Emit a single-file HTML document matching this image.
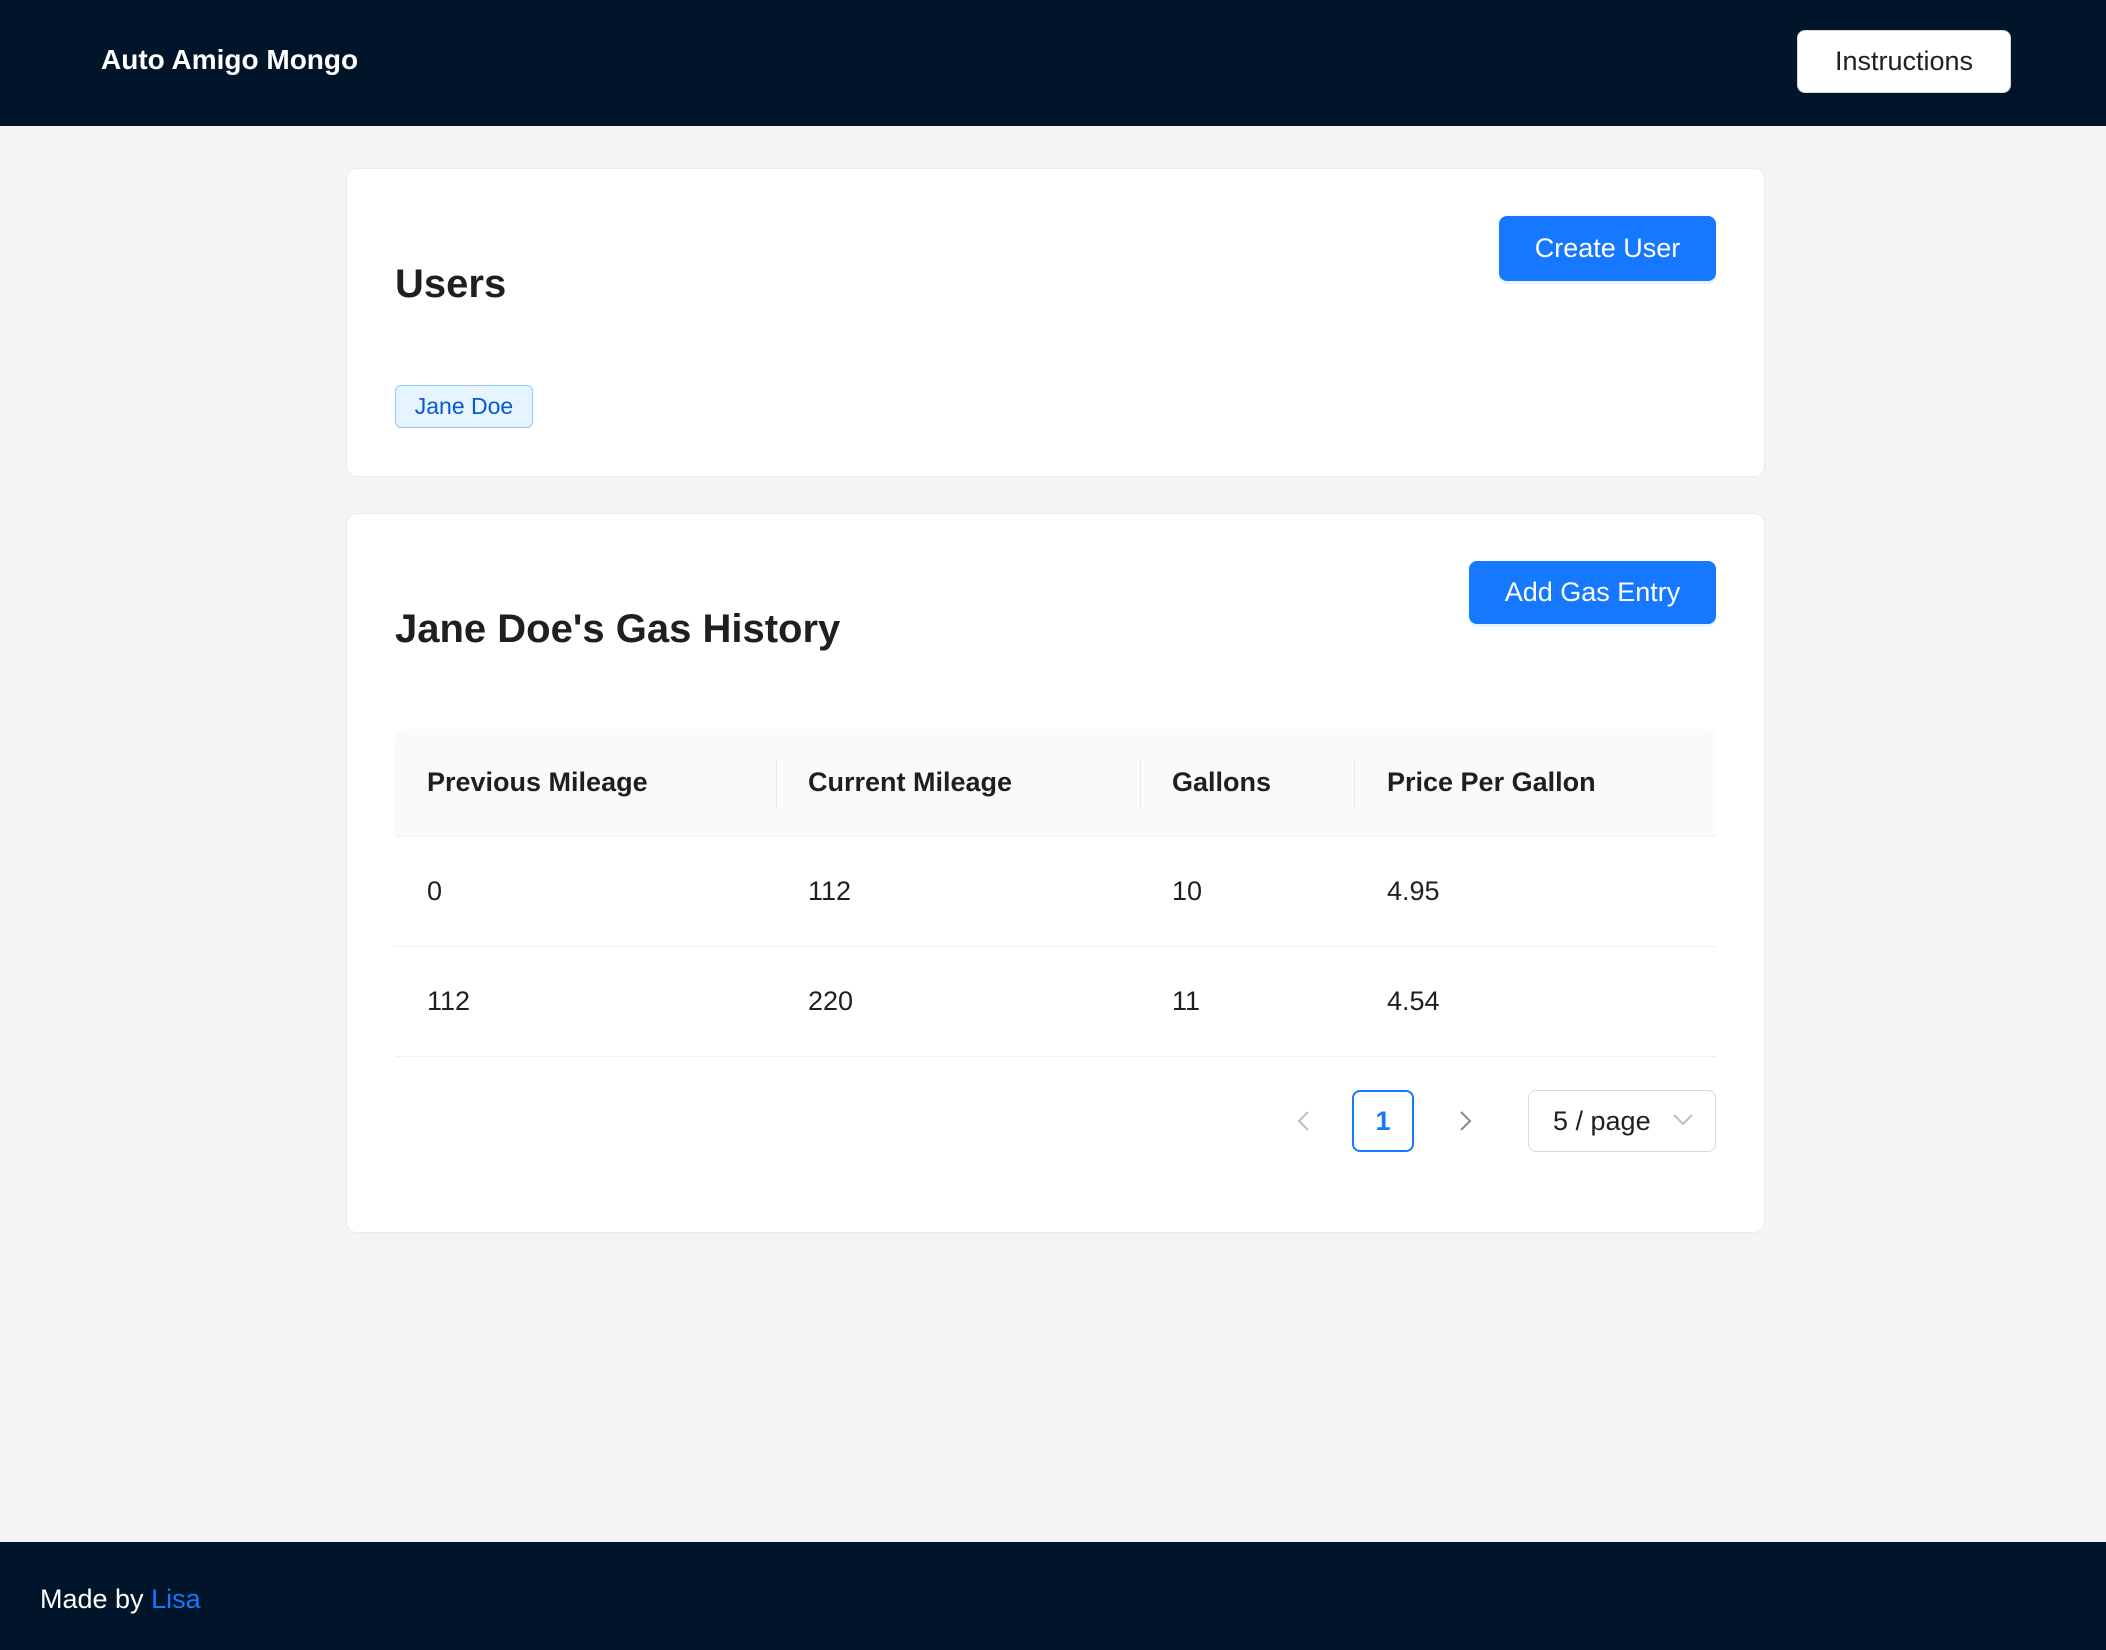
<!DOCTYPE html>
<html><head><meta charset="utf-8"><style>
*{box-sizing:border-box;margin:0;padding:0}
body{width:2106px;height:1650px;background:#f4f4f4;font-family:"Liberation Sans",sans-serif;color:#1f1f1f;position:relative;overflow:hidden}
.hdr{position:absolute;left:0;top:0;width:2106px;height:126px;background:#001529}
.brand{position:absolute;left:101px;top:44px;color:#fff;font-weight:bold;font-size:28px}
.ibtn{position:absolute;left:1797px;top:30px;width:214px;height:63px;background:#fff;border:1px solid #d9d9d9;border-radius:8px;font-size:27px;display:flex;align-items:center;justify-content:center;color:#1f1f1f}
.card{position:absolute;left:346px;width:1419px;background:#fff;border:1px solid #ebebeb;border-radius:11px}
.title{position:absolute;left:395px;font-weight:bold;font-size:40px;color:#1f1f1f}
.pbtn{position:absolute;background:#1677ff;color:#fff;border-radius:8px;font-size:27px;display:flex;align-items:center;justify-content:center;box-shadow:0 3px 0 rgba(5,145,255,.1)}
.tag{position:absolute;left:395px;top:385px;width:138px;height:43px;background:#e6f4ff;border:1px solid #91caff;border-radius:6px;color:#0958d9;font-size:23px;display:flex;align-items:center;justify-content:center}
.th{position:absolute;left:395px;top:729px;width:1321px;height:108px;background:#fafafa;border-radius:11px 11px 0 0;border-bottom:1px solid #f0f0f0}
.row{position:absolute;left:395px;width:1321px;height:110px;border-bottom:1px solid #f0f0f0}
.c{position:absolute;top:0;height:100%;display:flex;align-items:center;font-size:27px}
.th .c{font-weight:bold}
.div{position:absolute;top:29px;width:1px;height:50px;background:#ececec}
.foot{position:absolute;left:0;top:1542px;width:2106px;height:108px;background:#001529;color:#fff;font-size:27px}
</style></head><body>
<div class="hdr"><div class="brand">Auto Amigo Mongo</div><div class="ibtn">Instructions</div></div>

<div class="card" style="top:168px;height:309px"></div>
<div class="title" style="top:262px">Users</div>
<div class="pbtn" style="left:1499px;top:216px;width:217px;height:65px">Create User</div>
<div class="tag">Jane Doe</div>

<div class="card" style="top:513px;height:720px"></div>
<div class="title" style="top:607px">Jane Doe's Gas History</div>
<div class="pbtn" style="left:1469px;top:561px;width:247px;height:63px">Add Gas Entry</div>

<div class="th">
<div class="c" style="left:32px">Previous Mileage</div>
<div class="div" style="left:381px"></div>
<div class="c" style="left:413px">Current Mileage</div>
<div class="div" style="left:745px"></div>
<div class="c" style="left:777px">Gallons</div>
<div class="div" style="left:959px"></div>
<div class="c" style="left:992px">Price Per Gallon</div>
</div>
<div class="row" style="top:837px">
<div class="c" style="left:32px">0</div><div class="c" style="left:413px">112</div><div class="c" style="left:777px">10</div><div class="c" style="left:992px">4.95</div>
</div>
<div class="row" style="top:947px">
<div class="c" style="left:32px">112</div><div class="c" style="left:413px">220</div><div class="c" style="left:777px">11</div><div class="c" style="left:992px">4.54</div>
</div>

<svg style="position:absolute;left:1294px;top:1110px" width="20" height="22" viewBox="0 0 20 22"><path d="M14 2 L5 11 L14 20" fill="none" stroke="#bfbfbf" stroke-width="2"/></svg>
<div style="position:absolute;left:1352px;top:1090px;width:62px;height:62px;border:2px solid #1677ff;border-radius:8px;color:#1677ff;font-weight:bold;font-size:27px;display:flex;align-items:center;justify-content:center">1</div>
<svg style="position:absolute;left:1455px;top:1110px" width="20" height="22" viewBox="0 0 20 22"><path d="M6 2 L15 11 L6 20" fill="none" stroke="#8c8c8c" stroke-width="2"/></svg>
<div style="position:absolute;left:1528px;top:1090px;width:188px;height:62px;border:1px solid #d9d9d9;border-radius:8px;font-size:27px;display:flex;align-items:center;padding-left:24px">5 / page
<svg style="position:absolute;right:22px;top:22px" width="20" height="14" viewBox="0 0 20 14"><path d="M1 2 L10 11 L19 2" fill="none" stroke="#bfbfbf" stroke-width="2"/></svg></div>

<div class="foot"><div style="position:absolute;left:40px;top:42px">Made by <span style="color:#1677ff">Lisa</span></div></div>
</body></html>
